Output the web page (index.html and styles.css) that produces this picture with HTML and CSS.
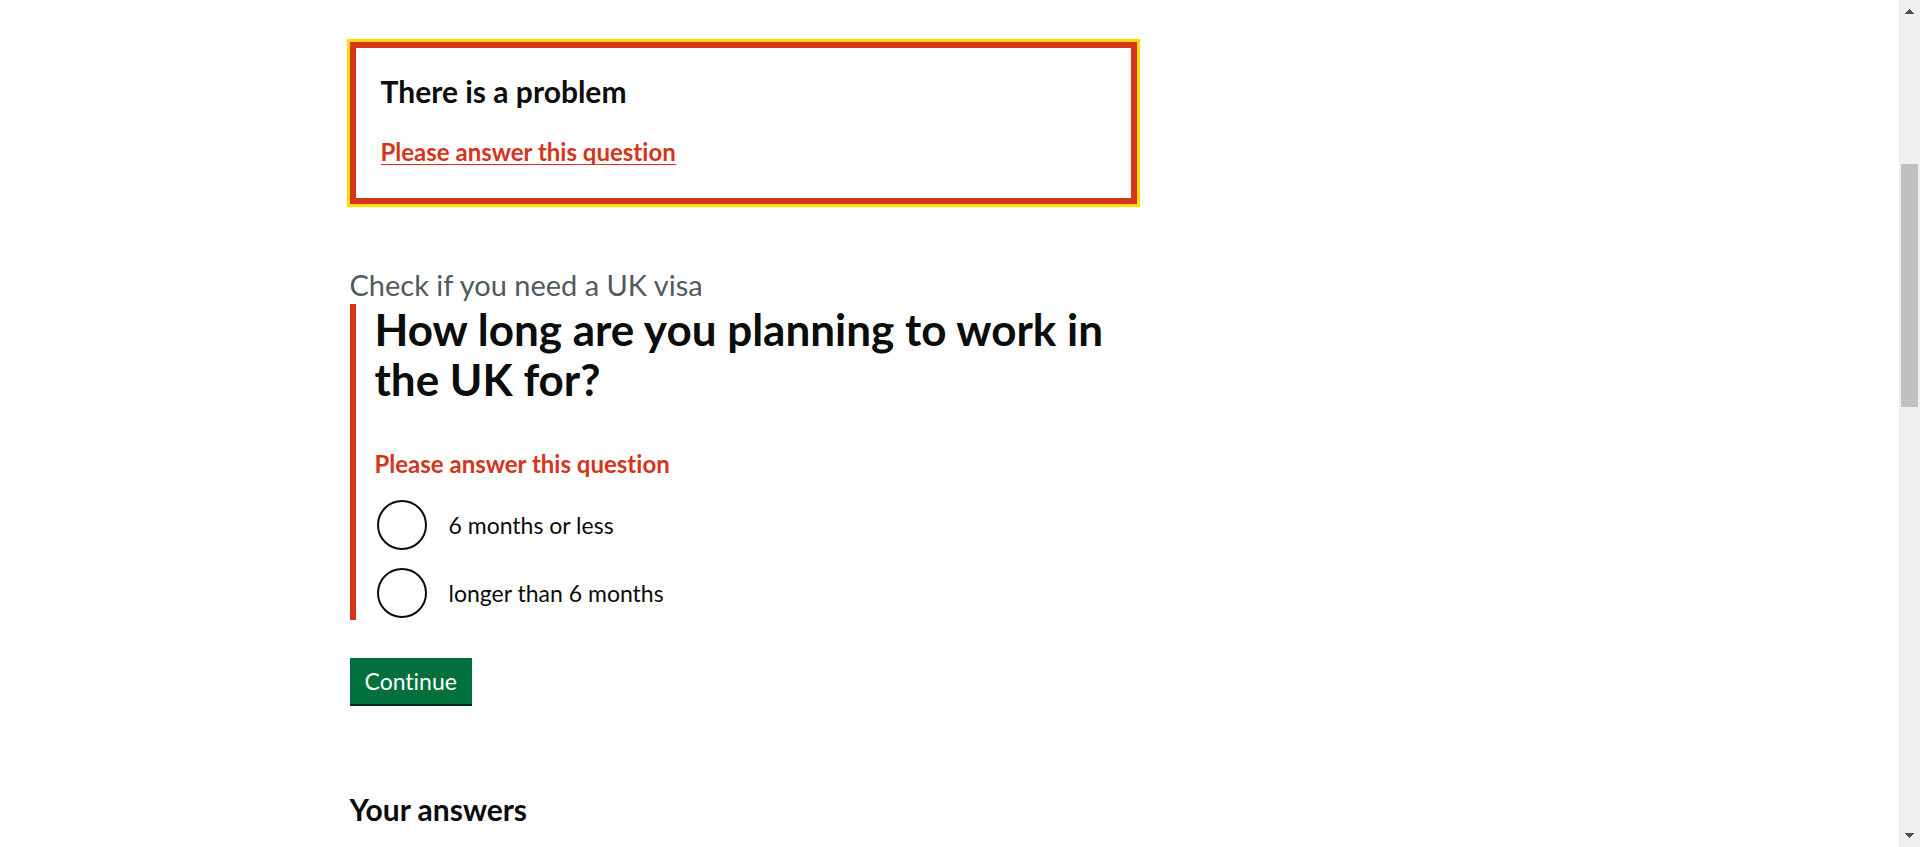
FILE: index.html
```html
<!DOCTYPE html>
<html lang="en">
<head>
<meta charset="utf-8">
<title>Check if you need a UK visa</title>
<link rel="stylesheet" href="styles.css">
</head>
<body>
<div class="page">
  <div class="container">
    <main class="column">
      <section class="error-summary" aria-labelledby="error-title">
        <h2 class="heading-m" id="error-title">There is a problem</h2>
        <a class="error-link" href="#period-0">Please answer this question</a>
      </section>
      <form class="question">
        <span class="caption">Check if you need a UK visa</span>
        <fieldset class="group" aria-describedby="error-message">
          <legend class="legend"><h1 class="heading-l">How long are you planning to work in the UK for?</h1></legend>
          <p class="error-message" id="error-message">Please answer this question</p>
          <div class="radios">
            <div class="radio-item">
              <input class="radio" type="radio" name="period" id="period-0">
              <label class="radio-label" for="period-0">6 months or less</label>
            </div>
            <div class="radio-item">
              <input class="radio" type="radio" name="period" id="period-1">
              <label class="radio-label" for="period-1">longer than 6 months</label>
            </div>
          </div>
        </fieldset>
        <button class="button" type="button">Continue</button>
      </form>
      <h2 class="heading-m">Your answers</h2>
    </main>
  </div>
</div>
<div class="scrollbar" aria-hidden="true">
  <svg class="arrow" viewBox="0 0 9 5" shape-rendering="crispEdges"><path d="M4 0h1v1h1v1h1v1h1v1h1v1H0V4h1V3h1V2h1V1h1z"/></svg>
  <div class="track"><div class="thumb"></div></div>
  <svg class="arrow" viewBox="0 0 9 5" shape-rendering="crispEdges"><path d="M0 0h9v1H8v1H7v1H6v1H5v1H4V4H3V3H2V2H1V1H0z"/></svg>
</div>
</body>
</html>
```

FILE: styles.css
```css
* { box-sizing: border-box; }

body {
  margin: 0;
  display: flex;
  height: 100vh;
  overflow: hidden;
  background: #fff;
  color: #0b0c0c;
  font-family: Lato, "Liberation Sans", sans-serif;
  font-size: 23px;
  line-height: 32px;
  font-variant-ligatures: none;
}

h1, h2, p { margin: 0; }

.page { flex: 1; }

.container {
  max-width: 1200px;
  margin: 0 auto;
  padding-top: 42px;
}

.column { width: 66%; max-width: 787px; }

.heading-m { font-size: 30px; line-height: 38px; font-weight: 700; }
.heading-l { font-size: 44px; line-height: 50px; font-weight: 700; }

.error-summary {
  display: flex;
  flex-direction: column;
  align-items: flex-start;
  gap: 29px;
  margin-bottom: 62px;
  padding: 24px 25px 33px;
  border: 6px solid #d4351c;
  outline: 3px solid #fd0;
}

.error-link {
  border-bottom: 1px solid #d4351c;
  color: #d4351c;
  font-size: 24px;
  font-weight: 700;
  line-height: 25px;
  text-decoration: none;
}

.question { margin-bottom: 86px; }

.caption {
  display: block;
  color: #505a5f;
  font-size: 29px;
  line-height: 38px;
}

.group {
  margin: 0 0 38px;
  padding: 0 0 0 19px;
  border: 0;
  border-left: 6px solid #d4351c;
  min-width: 0;
}

.legend { float: left; width: 100%; padding: 0; }

.error-message {
  clear: both;
  padding: 44px 0 20px;
  color: #d4351c;
  font-size: 24px;
  font-weight: 700;
}

.radios { display: grid; gap: 18px; padding: 0 2px 2px; }
.radio-item { display: flex; align-items: center; }

.radio {
  appearance: none;
  width: 50px;
  height: 50px;
  margin: 0;
  border: 2px solid #0b0c0c;
  border-radius: 50%;
  background: #fff;
}

.radio-label { padding: 0 22px; }

.button {
  display: block;
  height: 46px;
  padding: 0 15px;
  border: 0;
  background: #00703c;
  box-shadow: 0 2px 0 #002d18;
  color: #fff;
  font: inherit;
}

.scrollbar {
  display: flex;
  flex-direction: column;
  align-items: center;
  width: 21px;
  padding: 9px 2px;
  background: #f0f0f0;
}

.arrow { width: 9px; height: 5px; fill: #505050; }

.track { flex: 1; width: 100%; padding: 150px 0 0; }
.thumb { height: 37%; max-height: 243px; background: #c1c1c1; }
```
